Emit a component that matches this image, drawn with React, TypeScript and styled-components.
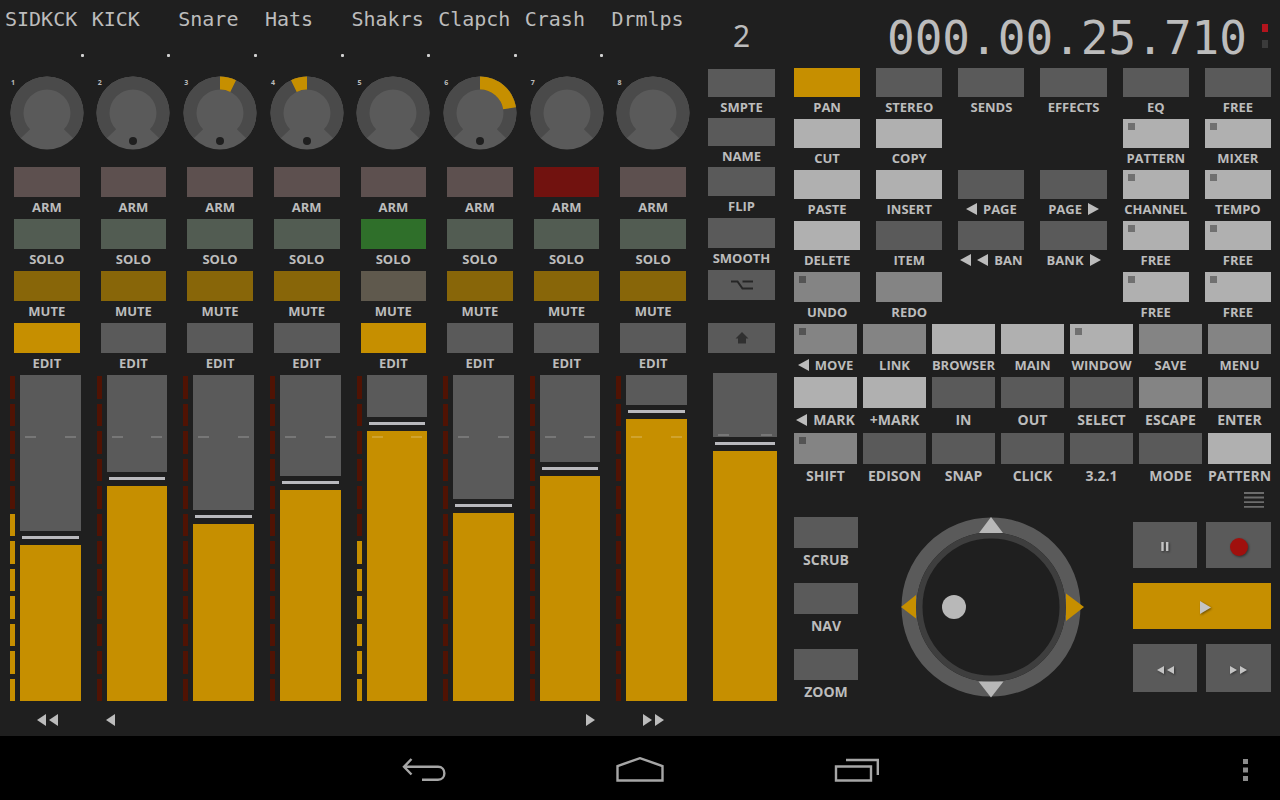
import React, { useState } from "react";
import styled, { createGlobalStyle } from "styled-components";

const color = {
  surface: "#1f1f1f",
  text: "#bcbcbc",
  dark: "#5a5a5a",
  mid: "#848484",
  light: "#b0b0b0",
  amber: "#c68f00",
  armOff: "#5d504f",
  armOn: "#71120f",
  soloOff: "#525c52",
  soloOn: "#2f6f2a",
  muteOn: "#886609",
  muteOff: "#5f594d",
  meterOff: "#501304",
};

const GlobalStyle = createGlobalStyle`
  * { box-sizing: border-box; }
  body { margin: 0; background: #000; }
  button { font: inherit; color: inherit; border: 0; padding: 0; margin: 0; background: none; cursor: pointer; }
`;

const Page = styled.div`
  min-height: 100vh;
  display: flex;
  flex-direction: column;
  color: ${color.text};
  font-family: "Open Sans", "Noto Sans", sans-serif;
`;

const Surface = styled.main`
  flex: 1;
  display: grid;
  grid-template-columns: minmax(0, 694fr) minmax(0, 67fr) minmax(0, 486fr);
  column-gap: 10px;
  padding: 0 9px 0 4px;
  background: ${color.surface};
`;

/* ---------- keys ---------- */

const KeyButton = styled.button`
  display: flex;
  flex-direction: column;
  width: 100%;
`;

const Face = styled.span<{ $bg: string; $h: number }>`
  display: flex;
  align-items: flex-start;
  width: 100%;
  height: ${(p) => p.$h}px;
  padding: 4px 5px;
  background: ${(p) => p.$bg};
`;

const Led = styled.span<{ $bg: string }>`
  width: 7px;
  height: 7px;
  background: ${(p) => p.$bg};
`;

const Caption = styled.span<{ $h: number; $size: number }>`
  display: flex;
  align-items: center;
  justify-content: center;
  gap: 6px;
  width: 100%;
  height: ${(p) => p.$h}px;
  padding-bottom: 2px;
  font-size: ${(p) => p.$size}px;
  line-height: 20px;
  font-weight: 700;
  white-space: nowrap;
`;

type Tone = "dark" | "mid" | "light" | "amber";

function Arrow({ dir, w = 11, h = 12 }: { dir: "left" | "right"; w?: number; h?: number }) {
  return (
    <svg width={w} height={h} viewBox="0 0 10 11" preserveAspectRatio="none" aria-hidden="true">
      <path d={dir === "left" ? "M10 0V11L0 5.5Z" : "M0 0V11L10 5.5Z"} fill="currentColor" />
    </svg>
  );
}

interface KeyProps {
  label: string;
  bg: string;
  led?: string;
  h?: number;
  cap?: number;
  size?: number;
  before?: number;
  after?: number;
}

function Key({ label, bg, led, h = 30, cap = 22, size = 13, before = 0, after = 0 }: KeyProps) {
  return (
    <KeyButton type="button">
      <Face $bg={bg} $h={h}>{led && <Led $bg={led} />}</Face>
      <Caption $h={cap} $size={size}>
        {Array.from({ length: before }, (_, i) => <Arrow key={i} dir="left" />)}
        {label}
        {Array.from({ length: after }, (_, i) => <Arrow key={i} dir="right" />)}
      </Caption>
    </KeyButton>
  );
}

/* ---------- faders ---------- */

const FaderBox = styled.div`
  position: relative;
  flex: 1;
  display: flex;
  flex-direction: column;
  min-height: 200px;
`;

const Level = styled.div<{ $bg: string }>`
  background: ${(p) => p.$bg};
`;

const Handle = styled.div`
  flex: none;
  height: 14px;
  padding: 5px 2px 6px;
  &::before {
    content: "";
    display: block;
    height: 3px;
    background: #b9b9bd;
  }
`;

const Unity = styled.div`
  position: absolute;
  top: 61px;
  left: 5px;
  right: 5px;
  display: flex;
  justify-content: space-between;
  &::before,
  &::after {
    content: "";
    width: 11px;
    height: 2px;
    background: rgba(255, 255, 255, 0.18);
  }
`;

const HiddenRange = styled.input`
  position: absolute;
  inset: 0;
  width: 100%;
  height: 100%;
  margin: 0;
  opacity: 0;
  cursor: pointer;
`;

const VerticalRange = styled(HiddenRange)`
  writing-mode: vertical-lr;
  direction: rtl;
`;

function Fader({ name, initial, max }: { name: string; initial: number; max: number }) {
  const [value, setValue] = useState(initial);
  return (
    <FaderBox>
      <Level $bg={color.dark} style={{ flex: `${max - value} 0 0px` }} />
      <Handle />
      <Level $bg={color.amber} style={{ flex: `${value} 0 0px` }} />
      <Unity />
      <VerticalRange
        type="range"
        min={0}
        max={max}
        value={value}
        aria-label={`${name} level`}
        onChange={(e) => setValue(Number(e.target.value))}
      />
    </FaderBox>
  );
}

/* ---------- channel strips ---------- */

const Mixer = styled.section`
  display: flex;
  flex-direction: column;
  padding-right: 1px;
`;

const Strips = styled.div`
  flex: 1;
  display: grid;
  grid-template-columns: repeat(8, minmax(0, 1fr));
`;

const Strip = styled.div`
  display: flex;
  flex-direction: column;
  padding-top: 7px;
`;

const StripName = styled.div`
  height: 24px;
  padding-left: 1px;
  font: 20px/24px "DejaVu Sans Mono", monospace;
  white-space: nowrap;
`;

const PeakRow = styled.div`
  display: flex;
  align-items: center;
  justify-content: flex-end;
  height: 45px;
  padding: 3px 7px 0 0;
`;

const PeakDot = styled.span`
  width: 3px;
  height: 3px;
  border-radius: 1px;
  background: #d0d0d0;
`;

const KnobBox = styled.div`
  position: relative;
  display: flex;
  justify-content: center;
  height: 91px;
  padding-right: 1px;
`;

const StripNumber = styled.span`
  position: absolute;
  left: 7px;
  top: 2px;
  font-size: 7px;
  line-height: 9px;
  font-weight: 700;
`;

const StripKeys = styled.div`
  padding: 0 11px 0 10px;
`;

const FaderRow = styled.div`
  flex: 1;
  display: flex;
  gap: 5px;
  padding: 0 10px 0 6px;
`;

const Meter = styled.div`
  display: flex;
  flex-direction: column;
  gap: 5px;
  width: 5px;
  padding-top: 1px;
`;

const Segment = styled.span<{ $lit: boolean }>`
  flex: 1;
  background: ${(p) => (p.$lit ? color.amber : color.meterOff)};
`;

function point(r: number, deg: number) {
  const a = (deg * Math.PI) / 180;
  return `${(37 + r * Math.sin(a)).toFixed(2)} ${(37 - r * Math.cos(a)).toFixed(2)}`;
}

function ringPath(from: number, to: number, outer = 36.5, inner = 23.5) {
  const large = to - from > 180 ? 1 : 0;
  return `M${point(outer, from)}A${outer} ${outer} 0 ${large} 1 ${point(outer, to)}L${point(inner, to)}A${inner} ${inner} 0 ${large} 0 ${point(inner, from)}Z`;
}

function Knob({ name, pan, dot }: { name: string; pan: number; dot: boolean }) {
  const [value, setValue] = useState(pan);
  return (
    <>
      <svg width="74" height="74" viewBox="0 0 74 74" aria-hidden="true">
        <circle cx="37" cy="37" r="36.5" fill={color.dark} />
        <path d={ringPath(-134, 134)} fill="#4a4a4a" />
        {value !== 0 && <path d={ringPath(Math.min(0, value), Math.max(0, value))} fill={color.amber} />}
        {dot && <circle cx="37" cy="65" r="4" fill={color.surface} />}
      </svg>
      <HiddenRange
        type="range"
        min={-134}
        max={134}
        value={value}
        aria-label={`${name} pan`}
        onChange={(e) => setValue(Number(e.target.value))}
      />
    </>
  );
}

interface Channel {
  name: string;
  pan: number;
  dot?: boolean;
  level: number;
  lit?: number;
  arm?: boolean;
  solo?: boolean;
  edit?: boolean;
}

const channels: Channel[] = [
  { name: "SIDKCK", pan: 0, level: 156, lit: 7, edit: true },
  { name: "KICK", pan: 0, dot: true, level: 215 },
  { name: "Snare", pan: 26, dot: true, level: 177 },
  { name: "Hats", pan: -26, dot: true, level: 211 },
  { name: "Shakrs", pan: 0, level: 270, lit: 6, solo: true, edit: true },
  { name: "Clapch", pan: 81, dot: true, level: 188 },
  { name: "Crash", pan: 0, level: 225, arm: true },
  { name: "Drmlps", pan: 0, level: 282 },
];

function ChannelStrip({ ch, index }: { ch: Channel; index: number }) {
  const lit = ch.lit ?? 0;
  return (
    <Strip>
      <StripName>{ch.name}</StripName>
      <PeakRow>{index < 7 && <PeakDot />}</PeakRow>
      <KnobBox>
        <StripNumber>{index + 1}</StripNumber>
        <Knob name={ch.name} pan={ch.pan} dot={!!ch.dot} />
      </KnobBox>
      <StripKeys>
        <Key label="ARM" bg={ch.arm ? color.armOn : color.armOff} />
        <Key label="SOLO" bg={ch.solo ? color.soloOn : color.soloOff} />
        <Key label="MUTE" bg={ch.solo ? color.muteOff : color.muteOn} />
        <Key label="EDIT" bg={ch.edit ? color.amber : color.dark} />
      </StripKeys>
      <FaderRow>
        <Meter>
          {Array.from({ length: 12 }, (_, i) => <Segment key={i} $lit={i >= 12 - lit} />)}
        </Meter>
        <Fader name={ch.name} initial={ch.level} max={312} />
      </FaderRow>
    </Strip>
  );
}

const BankRow = styled.nav`
  display: grid;
  grid-template-columns: repeat(8, minmax(0, 1fr));
  height: 35px;
`;

const BankButton = styled.button<{ $start?: number; $align?: string }>`
  grid-column-start: ${(p) => p.$start};
  display: flex;
  align-items: center;
  justify-content: ${(p) => p.$align ?? "center"};
  gap: 3px;
  padding: 2px 15px 0;
`;

/* ---------- master column ---------- */

const Master = styled.section`
  display: flex;
  flex-direction: column;
  padding-bottom: 35px;
`;

const BankNumber = styled.div`
  height: 69px;
  padding-top: 4px;
  font-family: "Noto Sans", sans-serif;
  font-size: 30px;
  line-height: 64px;
  font-weight: 400;
  text-align: center;
`;

const IconKey = styled.button<{ $gap: number }>`
  display: flex;
  align-items: center;
  justify-content: center;
  height: 30px;
  margin-bottom: ${(p) => p.$gap}px;
  background: ${color.dark};
`;

const MasterFader = styled.div`
  flex: 1;
  display: flex;
  padding-left: 5px;
  margin-right: -2px;
`;

/* ---------- right panel ---------- */

const Panel = styled.section`
  padding-left: 9px;
`;

const Display = styled.header`
  display: flex;
  align-items: center;
  justify-content: flex-end;
  gap: 15px;
  height: 68px;
  padding: 0 3px;
`;

const TimeCode = styled.output`
  padding-top: 7px;
  font: 46px/60px "DejaVu Sans Mono", monospace;
  white-space: nowrap;
`;

const Lamps = styled.div`
  display: flex;
  flex-direction: column;
  gap: 8px;
  padding-top: 3px;
`;

const Lamp = styled.span<{ $on?: boolean }>`
  width: 6px;
  height: 8px;
  background: ${(p) => (p.$on ? "#b3141d" : "#3b3b3b")};
`;

const KeyRow = styled.div<{ $cols: number; $gap: number }>`
  display: grid;
  grid-template-columns: repeat(${(p) => p.$cols}, minmax(0, 1fr));
  column-gap: ${(p) => p.$gap}px;
`;

interface KeyDef {
  t: string;
  tone: Tone;
  led?: boolean;
  before?: number;
  after?: number;
}

const k = (t: string, tone: Tone = "dark", extra: Partial<KeyDef> = {}): KeyDef => ({ t, tone, ...extra });
const led = { led: true };

interface RowDef {
  h: number;
  cap: number;
  size: number;
  keys: (KeyDef | null)[];
}

const upperRows: RowDef[] = [
  { h: 29, cap: 22, size: 13, keys: [k("PAN", "amber"), k("STEREO"), k("SENDS"), k("EFFECTS"), k("EQ"), k("FREE")] },
  { h: 29, cap: 22, size: 13, keys: [k("CUT", "light"), k("COPY", "light"), null, null, k("PATTERN", "light", led), k("MIXER", "light", led)] },
  { h: 29, cap: 22, size: 13, keys: [k("PASTE", "light"), k("INSERT", "light"), k("PAGE", "dark", { before: 1 }), k("PAGE", "dark", { after: 1 }), k("CHANNEL", "light", led), k("TEMPO", "light", led)] },
  { h: 29, cap: 22, size: 13, keys: [k("DELETE", "light"), k("ITEM"), k("BAN", "dark", { before: 2 }), k("BANK", "dark", { after: 1 }), k("FREE", "light", led), k("FREE", "light", led)] },
  { h: 30, cap: 22, size: 13, keys: [k("UNDO", "mid", led), k("REDO", "mid"), null, null, k("FREE", "light", led), k("FREE", "light", led)] },
];

const lowerRows: RowDef[] = [
  { h: 30, cap: 23, size: 13, keys: [k("MOVE", "mid", { led: true, before: 1 }), k("LINK", "mid"), k("BROWSER", "light"), k("MAIN", "light"), k("WINDOW", "light", led), k("SAVE", "mid"), k("MENU", "mid")] },
  { h: 31, cap: 25, size: 14, keys: [k("MARK", "light", { before: 1 }), k("+MARK", "light"), k("IN"), k("OUT"), k("SELECT"), k("ESCAPE", "mid"), k("ENTER", "mid")] },
  { h: 31, cap: 25, size: 14, keys: [k("SHIFT", "mid", led), k("EDISON"), k("SNAP"), k("CLICK"), k("3.2.1"), k("MODE"), k("PATTERN", "light")] },
];

function Rows({ rows, cols, gap }: { rows: RowDef[]; cols: number; gap: number }) {
  return (
    <>
      {rows.map((row, r) => (
        <KeyRow key={r} $cols={cols} $gap={gap}>
          {row.keys.map((d, i) =>
            d ? (
              <Key
                key={i}
                label={d.t}
                bg={color[d.tone]}
                led={d.led ? (d.tone === "light" ? "#707070" : "#545454") : undefined}
                h={row.h}
                cap={row.cap}
                size={row.size}
                before={d.before}
                after={d.after}
              />
            ) : (
              <span key={i} />
            ),
          )}
        </KeyRow>
      ))}
    </>
  );
}

const MenuRow = styled.div`
  display: flex;
  justify-content: flex-end;
  align-items: flex-start;
  height: 28px;
  padding: 3px 7px 0 0;
`;

const MenuButton = styled.button`
  display: flex;
`;

const Deck = styled.div`
  display: grid;
  grid-template-columns: 64px 1fr 138px;
`;

const Modes = styled.div`
  display: flex;
  flex-direction: column;
  gap: 9px;
`;

const Jog = styled.div`
  display: flex;
  justify-content: center;
  padding-right: 9px;
`;

const Transport = styled.div`
  display: grid;
  grid-template-columns: 64px 1fr;
  grid-template-rows: 46px 46px 48px;
  gap: 15px 9px;
  padding-top: 5px;
`;

const TransportKey = styled.button<{ $wide?: boolean }>`
  display: flex;
  align-items: center;
  justify-content: center;
  grid-column: ${(p) => (p.$wide ? "1 / -1" : "auto")};
  gap: 3px;
  padding: ${(p) => (p.$wide ? "3px 0 0 6px" : "3px 0 0")};
  color: #c4c4c4;
  background: ${(p) => (p.$wide ? color.amber : color.dark)};
  svg {
    filter: drop-shadow(1px 1px 1px rgba(0, 0, 0, 0.45));
  }
`;

/* ---------- system bar ---------- */

const SystemBar = styled.nav`
  display: grid;
  grid-template-columns: 1fr 216px 216px 216px 1fr;
  height: 64px;
  background: #000;
`;

const SystemButton = styled.button<{ $end?: boolean }>`
  display: flex;
  align-items: center;
  justify-content: ${(p) => (p.$end ? "flex-end" : "center")};
  padding: ${(p) => (p.$end ? "4px 32px 0 0" : "4px 0 0")};
`;

const line = { fill: "none", stroke: "#a6a6a6", strokeWidth: 2.4 };

export default function App() {
  return (
    <Page>
      <GlobalStyle />
      <Surface>
        <Mixer>
          <Strips>
            {channels.map((ch, i) => <ChannelStrip key={ch.name} ch={ch} index={i} />)}
          </Strips>
          <BankRow aria-label="Channel banks">
            <BankButton type="button" aria-label="Bank left">
              <Arrow dir="left" w={9} /><Arrow dir="left" w={9} />
            </BankButton>
            <BankButton type="button" aria-label="Channel left" $align="flex-start">
              <Arrow dir="left" w={9} />
            </BankButton>
            <BankButton type="button" aria-label="Channel right" $start={7} $align="flex-end">
              <Arrow dir="right" w={9} />
            </BankButton>
            <BankButton type="button" aria-label="Bank right">
              <Arrow dir="right" w={9} /><Arrow dir="right" w={9} />
            </BankButton>
          </BankRow>
        </Mixer>

        <Master>
          <BankNumber>2</BankNumber>
          <Key label="SMPTE" bg={color.dark} h={28} cap={21} />
          <Key label="NAME" bg={color.dark} h={28} cap={21} />
          <Key label="FLIP" bg={color.dark} h={29} cap={22} />
          <Key label="SMOOTH" bg={color.dark} />
          <IconKey type="button" aria-label="Option" $gap={23}>
            <svg width="22" height="10" viewBox="0 0 22 10" aria-hidden="true">
              <path d="M0 1.5H6.5L11.5 8.5H22M11.5 1.5H22" fill="none" stroke="#262626" strokeWidth="2" />
            </svg>
          </IconKey>
          <IconKey type="button" aria-label="Shift" $gap={20}>
            <svg width="14" height="12" viewBox="0 0 14 12" aria-hidden="true">
              <path d="M7 0L13.500 6.500H11V11.500H3V6.500H0.500Z" fill="#303030" />
            </svg>
          </IconKey>
          <MasterFader>
            <Fader name="Master" initial={250} max={314} />
          </MasterFader>
        </Master>

        <Panel>
          <Display>
            <TimeCode>000.00.25.710</TimeCode>
            <Lamps><Lamp $on /><Lamp /></Lamps>
          </Display>
          <Rows rows={upperRows} cols={6} gap={16} />
          <Rows rows={lowerRows} cols={7} gap={6} />
          <MenuRow>
            <MenuButton type="button" aria-label="Menu">
              <svg width="20" height="16" viewBox="0 0 20 16" aria-hidden="true">
                <path d="M0 1H20M0 5.5H20M0 10.2H20M0 14.8H20" stroke="#6c6c6c" strokeWidth="1.8" />
              </svg>
            </MenuButton>
          </MenuRow>
          <Deck>
            <Modes>
              <Key label="SCRUB" bg={color.dark} h={31} cap={26} size={14} />
              <Key label="NAV" bg={color.dark} h={31} cap={26} size={14} />
              <Key label="ZOOM" bg={color.dark} h={31} cap={26} size={14} />
            </Modes>
            <Jog>
              <svg width="188" height="182" viewBox="-94 -90 188 182" role="img" aria-label="Jog wheel">
                <circle r="82" fill="none" stroke={color.dark} strokeWidth="15" />
                <circle r="71.5" fill="none" stroke="#3e3e3e" strokeWidth="6" />
                <path d="M0 -90L12 -74H-12Z" fill="#b8b8b8" />
                <path d="M0 90.5L12.5 74.5H-12.5Z" fill="#b8b8b8" />
                <path d="M-90 0L-75 -12V11.5Z" fill={color.amber} />
                <path d="M93 0L75 -13.5V14Z" fill={color.amber} />
                <circle cx="-37" cy="0" r="12" fill="#b8b8b8" />
              </svg>
            </Jog>
            <Transport>
              <TransportKey type="button" aria-label="Pause">
                <svg width="8" height="9" viewBox="0 0 8 9" aria-hidden="true">
                  <path d="M0.300 0H2.700V9H0.300ZM5 0H7.400V9H5Z" fill="currentColor" />
                </svg>
              </TransportKey>
              <TransportKey type="button" aria-label="Record">
                <svg width="18" height="18" viewBox="0 0 18 18" aria-hidden="true">
                  <circle cx="9" cy="9" r="9" fill="#a0100d" />
                </svg>
              </TransportKey>
              <TransportKey type="button" aria-label="Play" $wide>
                <Arrow dir="right" w={11} h={13} />
              </TransportKey>
              <TransportKey type="button" aria-label="Rewind">
                <Arrow dir="left" w={7} h={8} /><Arrow dir="left" w={7} h={8} />
              </TransportKey>
              <TransportKey type="button" aria-label="Fast forward">
                <Arrow dir="right" w={7} h={8} /><Arrow dir="right" w={7} h={8} />
              </TransportKey>
            </Transport>
          </Deck>
        </Panel>
      </Surface>

      <SystemBar aria-label="System">
        <span />
        <SystemButton type="button" aria-label="Back">
          <svg width="44" height="26" viewBox="0 0 44 26" aria-hidden="true">
            <path d="M9.5 2L2 9.8L9.5 17.5M2 9.8H36C44.500 9.8 44.500 22.800 36 22.800H20" {...line} />
          </svg>
        </SystemButton>
        <SystemButton type="button" aria-label="Home">
          <svg width="48" height="26" viewBox="0 0 48 26" aria-hidden="true">
            <path d="M1.500 23.500V9L24 1.200L46.500 9V23.500Z" {...line} />
          </svg>
        </SystemButton>
        <SystemButton type="button" aria-label="Recent apps">
          <svg width="46" height="26" viewBox="-2 0 46 26" aria-hidden="true">
            <path d="M1 9.500H36V23.500H1ZM11 3H42.800V18" {...line} />
          </svg>
        </SystemButton>
        <SystemButton type="button" aria-label="More" $end>
          <svg width="5" height="22" viewBox="0 0 5 22" aria-hidden="true">
            <path d="M0 0H5V5H0ZM0 8.500H5V13.500H0ZM0 17H5V22H0Z" fill="#8c8c8c" />
          </svg>
        </SystemButton>
      </SystemBar>
    </Page>
  );
}
